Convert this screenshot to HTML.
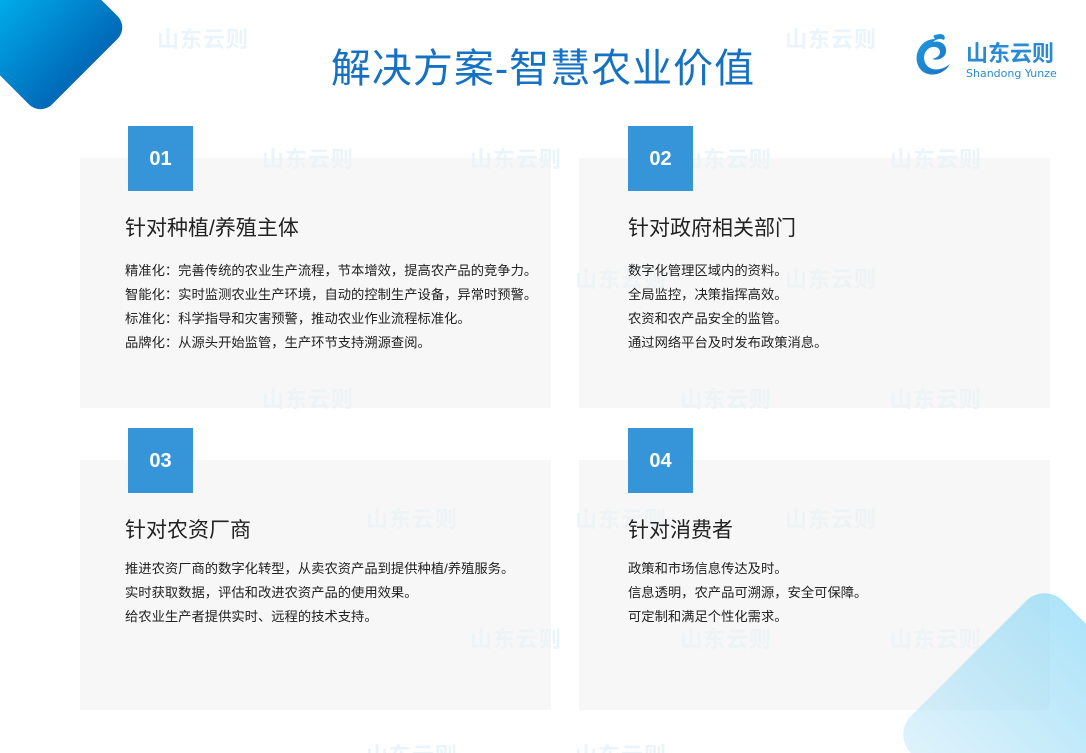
<!DOCTYPE html>
<html><head><meta charset="utf-8"><style>
*{margin:0;padding:0;box-sizing:border-box}
html,body{width:1086px;height:753px;overflow:hidden}
body{background:#fff;font-family:"Liberation Sans","Noto Sans CJK SC",sans-serif}
#wrap{position:relative;width:1086px;height:753px;overflow:hidden}
.tl{position:absolute;left:-22px;top:-35px;width:125px;height:125px;border-radius:16px;transform:rotate(45deg);background:linear-gradient(90deg,#00b4f0,#0068b7)}
.br{position:absolute;left:937px;top:627px;width:215px;height:215px;border-radius:26px;transform:rotate(45deg);background:linear-gradient(180deg,rgba(120,210,245,.6),rgba(190,230,248,.5))}
.wm{position:absolute;color:rgba(80,170,225,.12);font-size:22px;font-weight:bold;letter-spacing:1px;white-space:nowrap}
h1{position:absolute;left:0;width:1086px;top:36px;text-align:center;font-weight:normal;font-size:40px;color:#1571c2;letter-spacing:1px}
.card{position:absolute;width:471px;height:250px;background:rgba(240,240,240,.55)}
.num{position:absolute;width:65px;height:65px;background:#3595d8;color:#fff;font-weight:bold;font-size:20px;text-align:center;line-height:67px}
.t{position:absolute;font-size:21px;color:#222}
.b{position:absolute;font-size:13.3px;color:#222;line-height:24px;white-space:nowrap}
.logo{position:absolute;left:910px;top:30px}
</style></head><body><div id="wrap">
<div class="tl"></div>
<div class="wm" style="left:157px;top:22px">山东云则</div>
<div class="wm" style="left:785px;top:22px">山东云则</div>
<div class="wm" style="left:262px;top:142px">山东云则</div>
<div class="wm" style="left:470px;top:142px">山东云则</div>
<div class="wm" style="left:680px;top:142px">山东云则</div>
<div class="wm" style="left:890px;top:142px">山东云则</div>
<div class="wm" style="left:575px;top:262px">山东云则</div>
<div class="wm" style="left:785px;top:262px">山东云则</div>
<div class="wm" style="left:262px;top:382px">山东云则</div>
<div class="wm" style="left:680px;top:382px">山东云则</div>
<div class="wm" style="left:890px;top:382px">山东云则</div>
<div class="wm" style="left:366px;top:502px">山东云则</div>
<div class="wm" style="left:575px;top:502px">山东云则</div>
<div class="wm" style="left:785px;top:502px">山东云则</div>
<div class="wm" style="left:470px;top:622px">山东云则</div>
<div class="wm" style="left:680px;top:622px">山东云则</div>
<div class="wm" style="left:890px;top:622px">山东云则</div>
<div class="wm" style="left:366px;top:738px">山东云则</div>
<div class="wm" style="left:575px;top:738px">山东云则</div>
<h1>解决方案-智慧农业价值</h1>
<div class="logo">
<svg width="50" height="55" viewBox="0 0 50 55"><defs><linearGradient id="g" x1="0" y1="0" x2="1" y2="1"><stop offset="0" stop-color="#1e9ee0"/><stop offset="1" stop-color="#1a6fc4"/></linearGradient></defs>
<path d="M30 4c4 0 6 3 4 6-3-2-8-1-11 2 8-2 14 3 13 10-1 6-8 9-14 7 4-1 8-3 8-7 0-5-7-7-12-3-6 5-5 15 2 19 6 3 14 1 20-4-5 9-16 13-25 9-9-5-11-17-5-26 4-6 10-8 15-8-2-3-3-4 5-5z" fill="url(#g)"/></svg>
<div style="position:absolute;left:56px;top:6px;font-size:22px;font-weight:bold;color:#2a8bd4;white-space:nowrap">山东云则</div>
<div style="position:absolute;left:56px;top:37px;font-size:11px;color:#2a8bd4;white-space:nowrap;font-family:'DejaVu Sans',sans-serif">Shandong Yunze</div>
</div>

<div class="card" style="left:80px;top:158px"></div>
<div class="card" style="left:579px;top:158px"></div>
<div class="card" style="left:80px;top:460px"></div>
<div class="card" style="left:579px;top:460px"></div>
<div class="br"></div>

<div class="num" style="left:128px;top:126px">01</div>
<div class="num" style="left:628px;top:126px">02</div>
<div class="num" style="left:128px;top:428px">03</div>
<div class="num" style="left:628px;top:428px">04</div>

<div class="t" style="left:125px;top:212px">针对种植/养殖主体</div>
<div class="t" style="left:628px;top:212px">针对政府相关部门</div>
<div class="t" style="left:125px;top:514px">针对农资厂商</div>
<div class="t" style="left:628px;top:514px">针对消费者</div>

<div class="b" style="left:125px;top:259px">精准化：完善传统的农业生产流程，节本增效，提高农产品的竞争力。<br>智能化：实时监测农业生产环境，自动的控制生产设备，异常时预警。<br>标准化：科学指导和灾害预警，推动农业作业流程标准化。<br>品牌化：从源头开始监管，生产环节支持溯源查阅。</div>
<div class="b" style="left:628px;top:259px">数字化管理区域内的资料。<br>全局监控，决策指挥高效。<br>农资和农产品安全的监管。<br>通过网络平台及时发布政策消息。</div>
<div class="b" style="left:125px;top:557px">推进农资厂商的数字化转型，从卖农资产品到提供种植/养殖服务。<br>实时获取数据，评估和改进农资产品的使用效果。<br>给农业生产者提供实时、远程的技术支持。</div>
<div class="b" style="left:628px;top:557px">政策和市场信息传达及时。<br>信息透明，农产品可溯源，安全可保障。<br>可定制和满足个性化需求。</div>
</div></body></html>
